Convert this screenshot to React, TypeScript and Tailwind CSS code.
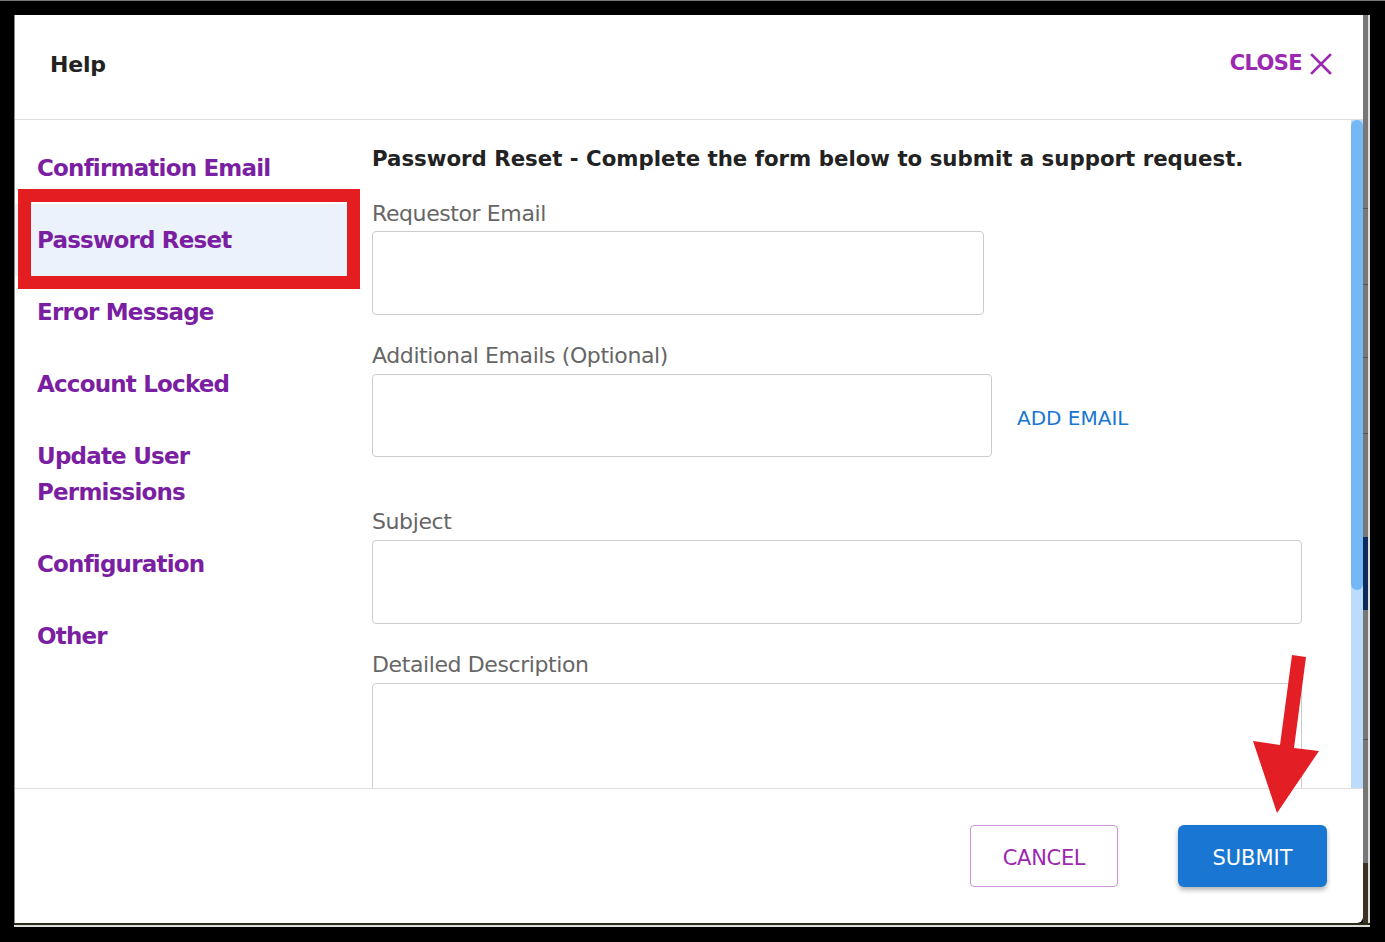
import React from "react";

const navItems: { lines: string[]; active?: boolean }[] = [
  { lines: ["Confirmation Email"] },
  { lines: ["Password Reset"], active: true },
  { lines: ["Error Message"] },
  { lines: ["Account Locked"] },
  { lines: ["Update User", "Permissions"] },
  { lines: ["Configuration"] },
  { lines: ["Other"] },
];

function Label({ children }: { children: React.ReactNode }) {
  return (
    <div className="text-[22px] leading-[28px] tracking-[-0.4px] text-[#666666] font-['DejaVu_Sans',sans-serif]">
      {children}
    </div>
  );
}

export default function App() {
  return (
    <div className="relative w-[1385px] h-[942px] bg-black overflow-hidden border-t border-[#777] font-['DejaVu_Sans',sans-serif]">
      <div className="ml-[14px] mt-[14px] w-[1356px] flex flex-col">
        <div className="flex h-[908px]">
          {/* modal */}
          <div className="w-[1349px] h-[908px] bg-white flex flex-col rounded-br-[6px] border-l border-[#888] overflow-hidden">
            {/* header */}
            <div className="h-[105px] shrink-0 flex items-center justify-between pl-[35px] pr-[31px] pb-[6px] border-b border-[#dddddd]">
              <div className="text-[22px] font-bold tracking-[-0.2px] text-[#222222]">Help</div>
              <div className="flex items-center gap-[8px] text-[#9c27b0]">
                <span className="text-[21px] font-bold tracking-[-0.6px]">CLOSE</span>
                <svg width="22" height="22" viewBox="0 0 22 22" fill="none" stroke="currentColor" strokeWidth="2.6" strokeLinecap="square">
                  <path d="M2 2 L20 20 M20 2 L2 20" />
                </svg>
              </div>
            </div>
            {/* body */}
            <div className="relative h-[669px] shrink-0 flex border-b border-[#dddddd]">
              <div className="w-[345px] shrink-0 pt-[12px]">
                {navItems.map((item, i) => (
                  <div
                    key={i}
                    className={`py-[18px] pl-[22px] text-[23px] leading-[36px] font-bold tracking-[-0.8px] text-[#7b1fa2] ${item.active ? "bg-[#ebf2fb]" : ""}`}
                  >
                    {item.lines.map((l, j) => (
                      <div key={j}>{l}</div>
                    ))}
                  </div>
                ))}
              </div>
              <div className="flex-1 min-w-0 overflow-hidden pl-[12px] pr-[49px] pt-[25px]">
                <div className="text-[21.3px] leading-[28px] font-bold text-[#222222] whitespace-nowrap">
                  Password Reset - Complete the form below to submit a support request.
                </div>
                <div className="mt-[27px]">
                  <Label>Requestor Email</Label>
                  <div className="mt-[3px] w-[612px] h-[84px] border border-[#cccccc] rounded-[4px]" />
                </div>
                <div className="mt-[27px]">
                  <Label>Additional Emails (Optional)</Label>
                  <div className="mt-[4px] flex items-center gap-[25px]">
                    <div className="w-[620px] h-[83px] border border-[#cccccc] rounded-[4px]" />
                    <span className="text-[20px] text-[#1976d2] pt-[4px]">ADD EMAIL</span>
                  </div>
                </div>
                <div className="mt-[51px]">
                  <Label>Subject</Label>
                  <div className="mt-[4px] w-full h-[84px] border border-[#cccccc] rounded-[4px]" />
                </div>
                <div className="mt-[27px]">
                  <Label>Detailed Description</Label>
                  <div className="mt-[4px] w-full h-[160px] border border-[#cccccc] rounded-[4px]" />
                </div>
              </div>
              {/* scrollbar */}
              <div className="w-[12px] shrink-0 bg-[#bbdcfb] flex flex-col">
                <div className="h-[470px] bg-[#74b9f6] rounded-full" />
              </div>
              {/* red annotation box */}
              <div className="absolute left-[3px] top-[69px] w-[342px] h-[100px] border-[13px] border-[#e41e20]" />
            </div>
            {/* footer */}
            <div className="flex-1 flex items-center justify-end gap-[60px] pr-[36px]">
              <button className="w-[148px] h-[62px] pt-[5px] border border-[#ce93d8] rounded-[4px] text-[21px] text-[#9c27b0] tracking-[-0.3px]">
                CANCEL
              </button>
              <button className="w-[149px] h-[62px] pt-[5px] bg-[#1976d2] rounded-[6px] text-[21px] text-white shadow-[0_3px_5px_rgba(0,0,0,0.3)]">
                SUBMIT
              </button>
            </div>
          </div>
          {/* background strip */}
          <div className="w-[7px] h-[908px] flex flex-col bg-[#777777] border-r-2 border-[#dddddd]">
            <div className="h-[194px] border-b border-[#555]" />
            <div className="h-[76px] border-b border-[#555]" />
            <div className="h-[73px] border-b border-[#555]" />
            <div className="h-[76px] border-b border-[#555]" />
            <div className="h-[103px]" />
            <div className="h-[73px] bg-[#0d2a5c]" />
            <div className="h-[130px] border-b border-[#555]" />
            <div className="h-[123px]" />
            <div className="flex-1 bg-[#3b3322]" />
          </div>
        </div>
        <div className="h-[2px] w-[1356px] bg-[#2b2b1a]" />
        <div className="h-[2px] w-[1356px] bg-[#dddddd]" />
      </div>
      {/* red arrow */}
      <svg className="absolute left-0 top-0 pointer-events-none" width="1385" height="942">
        <polygon
          points="1292,654 1306,656 1294,747 1319,750 1277,812 1253,740 1280,744"
          fill="#e31e24"
        />
      </svg>
    </div>
  );
}
